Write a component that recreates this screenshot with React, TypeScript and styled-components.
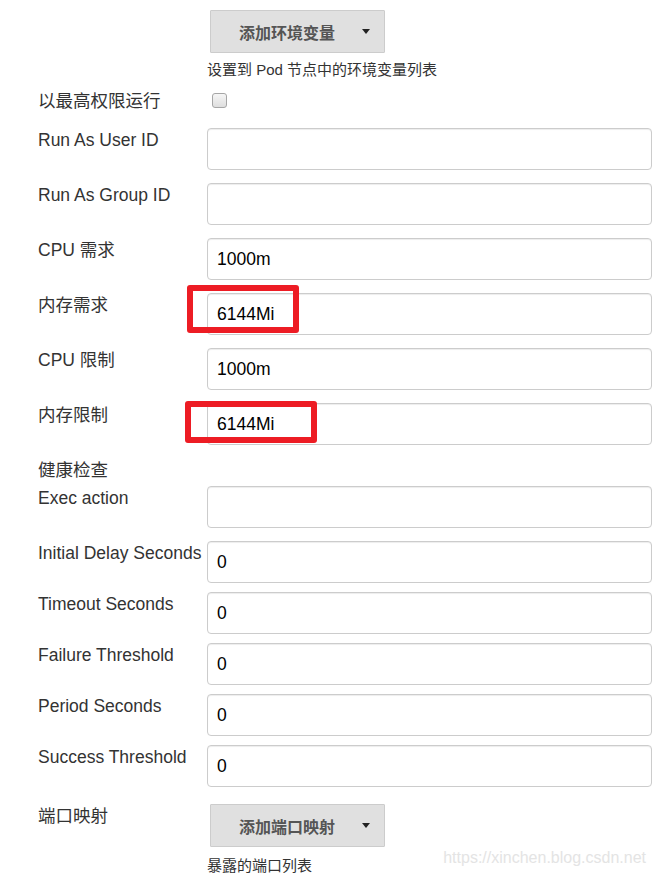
import React from 'react';
import styled, { createGlobalStyle } from 'styled-components';

const GlobalStyle = createGlobalStyle`
    body {
        margin: 0;
        background: #ffffff;
        font-family: "Liberation Sans", Arial, "Noto Sans CJK SC", sans-serif;
        color: #333333;
    }
`;

const Page = styled.div`
    position: relative;
    width: 656px;
    height: 879px;
    padding: 10px 4px 0 38px;
    box-sizing: border-box;
    overflow: hidden;
`;

const Row = styled.div<{ $gap?: number; $center?: boolean }>`
    display: grid;
    grid-template-columns: 169px 445px;
    align-items: ${p => (p.$center ? 'center' : 'start')};
    margin-bottom: ${p => p.$gap ?? 13}px;
`;

const Label = styled.div`
    font-size: 17.5px;
    line-height: 22px;
    padding-top: 1px;
    color: #333333;
    white-space: nowrap;
`;

const Heading = styled(Label)`
    margin-bottom: 5px;
`;

const Field = styled.div`
    position: relative;
    display: flex;
    flex-direction: column;
    align-items: flex-start;
`;

const Input = styled.input`
    width: 100%;
    height: 42px;
    box-sizing: border-box;
    border: 1px solid #cccccc;
    border-radius: 4px;
    box-shadow: inset 0 1px 1px rgba(0, 0, 0, 0.075);
    padding: 0 9px;
    font-family: inherit;
    font-size: 17.5px;
    color: #000000;
    background: #ffffff;
    outline: none;
`;

const DropButton = styled.button`
    display: flex;
    align-items: center;
    gap: 27px;
    height: 43px;
    margin-left: 3px;
    padding: 0 14px 0 28px;
    border: 1px solid #cccccc;
    border-radius: 1px;
    background: #e0e0e0;
    font-family: inherit;
    font-size: 16px;
    font-weight: bold;
    color: #555555;
    cursor: pointer;
`;

const Caret = styled.span`
    width: 0;
    height: 0;
    border-top: 5px solid #222222;
    border-left: 4.5px solid transparent;
    border-right: 4.5px solid transparent;
`;

const Help = styled.div<{ $top?: number }>`
    margin-top: ${p => p.$top ?? 8}px;
    font-size: 15px;
    line-height: 18px;
    color: #333333;
    white-space: nowrap;
`;

const Check = styled.span`
    display: block;
    width: 13px;
    height: 13px;
    margin-left: 5px;
    border: 1px solid #a6a6a6;
    border-radius: 3px;
    background: linear-gradient(#f6f6f6, #dedede);
`;

// red annotation frame drawn over a field
const Mark = styled.span<{ $l: number; $t: number; $w: number; $h: number }>`
    position: absolute;
    left: ${p => p.$l}px;
    top: ${p => p.$t}px;
    width: ${p => p.$w}px;
    height: ${p => p.$h}px;
    box-sizing: border-box;
    border: 6px solid #ed1c24;
    border-radius: 3px;
    pointer-events: none;
`;

const Watermark = styled.div`
    position: absolute;
    right: 10px;
    bottom: 12px;
    font-size: 16px;
    line-height: 18px;
    color: #e4e4e4;
`;

type FieldRowProps = {
    label: string;
    value?: string;
    gap?: number;
    mark?: { l: number; t: number; w: number; h: number };
};

function FieldRow({ label, value, gap, mark }: FieldRowProps) {
    return (
        <Row $gap={gap}>
            <Label>{label}</Label>
            <Field>
                <Input defaultValue={value} />
                {mark && <Mark $l={mark.l} $t={mark.t} $w={mark.w} $h={mark.h} />}
            </Field>
        </Row>
    );
}

export default function App() {
    return (
        <Page>
            <GlobalStyle />
            <Row $gap={10}>
                <span />
                <Field>
                    <DropButton>添加环境变量<Caret /></DropButton>
                    <Help>设置到 Pod 节点中的环境变量列表</Help>
                </Field>
            </Row>
            <Row $gap={16} $center>
                <Label>以最高权限运行</Label>
                <Check />
            </Row>
            <FieldRow label="Run As User ID" />
            <FieldRow label="Run As Group ID" />
            <FieldRow label="CPU 需求" value="1000m" />
            <FieldRow label="内存需求" value="6144Mi" mark={{ l: -20, t: -8, w: 112, h: 48 }} />
            <FieldRow label="CPU 限制" value="1000m" />
            <FieldRow label="内存限制" value="6144Mi" mark={{ l: -22, t: -2, w: 132, h: 42 }} />
            <Heading>健康检查</Heading>
            <FieldRow label="Exec action" />
            <FieldRow label="Initial Delay Seconds" value="0" gap={9} />
            <FieldRow label="Timeout Seconds" value="0" gap={9} />
            <FieldRow label="Failure Threshold" value="0" gap={9} />
            <FieldRow label="Period Seconds" value="0" gap={9} />
            <FieldRow label="Success Threshold" value="0" gap={17} />
            <Row $gap={0}>
                <Label>端口映射</Label>
                <Field>
                    <DropButton>添加端口映射<Caret /></DropButton>
                    <Help $top={10}>暴露的端口列表</Help>
                </Field>
            </Row>
            <Watermark>https://xinchen.blog.csdn.net</Watermark>
        </Page>
    );
}
